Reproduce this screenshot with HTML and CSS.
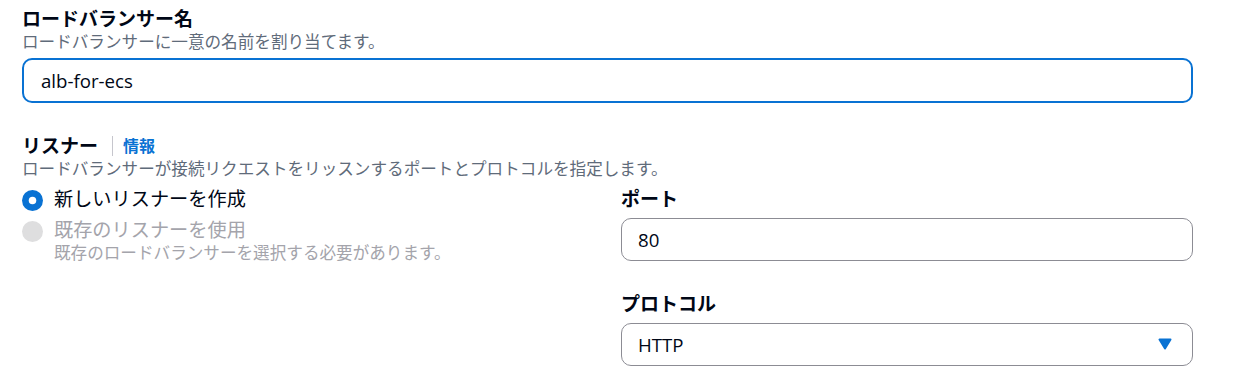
FILE: index.html
```html
<!DOCTYPE html>
<html lang="ja">
<head>
<meta charset="utf-8">
<title>ロードバランサー</title>
<link rel="stylesheet" href="styles.css">
</head>
<body>
<div class="page">
  <section class="field">
    <div class="label">ロードバランサー名</div>
    <div class="desc">ロードバランサーに一意の名前を割り当てます。</div>
    <div class="input focused">alb-for-ecs</div>
  </section>

  <section class="field listener">
    <div class="label-row">
      <span class="label">リスナー</span>
      <span class="info">情報</span>
    </div>
    <div class="desc">ロードバランサーが接続リクエストをリッスンするポートとプロトコルを指定します。</div>

    <div class="columns">
      <div class="radio-group">
        <div class="radio">
          <svg class="radio-icon" width="21" height="21" viewBox="0 0 100 100"><circle cx="50" cy="50" r="50" fill="#0972d3"/><circle cx="50" cy="50" r="18" fill="#ffffff"/></svg>
          <span class="radio-label">新しいリスナーを作成</span>
        </div>
        <div class="radio disabled">
          <svg class="radio-icon" width="21" height="21" viewBox="0 0 100 100"><circle cx="50" cy="50" r="50" fill="#dededf"/></svg>
          <div class="radio-text">
            <span class="radio-label">既存のリスナーを使用</span>
            <span class="radio-desc">既存のロードバランサーを選択する必要があります。</span>
          </div>
        </div>
      </div>

      <div class="right">
        <div class="sub-field">
          <div class="label">ポート</div>
          <div class="input">80</div>
        </div>
        <div class="sub-field protocol">
          <div class="label">プロトコル</div>
          <div class="input select">
            <span>HTTP</span>
            <svg class="caret" width="14" height="12" viewBox="0 0 14 12"><polygon points="1.5,1.5 12.5,1.5 7,10.5" fill="#0972d3" stroke="#0972d3" stroke-width="2" stroke-linejoin="round"/></svg>
          </div>
        </div>
      </div>
    </div>
  </section>
</div>
</body>
</html>
```
FILE: styles.css
```css
* { box-sizing: border-box; }

body {
  margin: 0;
  background: #ffffff;
  font-family: "Open Sans", "Noto Sans CJK JP", sans-serif;
  color: #000716;
}

.page {
  padding: 7px 44px 0 22px;
}

.label {
  font-size: 19px;
  line-height: 24px;
  font-weight: 700;
  color: #000716;
}

.desc {
  font-size: 16.6px;
  line-height: 21.33px;
  color: #5f6b7a;
}

.input {
  margin-top: 6px;
  height: 43px;
  border: 1px solid #8c8c94;
  border-radius: 10px;
  padding: 0 20px 0 16px;
  display: flex;
  align-items: center;
  font-size: 18.67px;
  color: #000716;
}

.input.focused {
  height: 45px;
  border: 2px solid #0972d3;
  padding-left: 17px;
}

.listener {
  margin-top: 31px;
}

.label-row {
  display: flex;
  align-items: center;
  height: 24px;
}

.info {
  margin-left: 14px;
  padding-left: 10px;
  border-left: 1px solid #c6c6cd;
  font-size: 16px;
  line-height: 20px;
  font-weight: 700;
  color: #0972d3;
}

.columns {
  margin-top: 7px;
  display: grid;
  grid-template-columns: 1fr 1fr;
  column-gap: 27px;
}

.radio-group {
  display: flex;
  flex-direction: column;
  gap: 7px;
}

.radio {
  display: flex;
  align-items: flex-start;
  gap: 11px;
}

.radio-icon {
  flex: none;
  margin-top: 3px;
}

.radio-text {
  display: flex;
  flex-direction: column;
}

.radio-label {
  font-size: 19.2px;
  line-height: 24px;
  color: #000716;
}

.radio-desc {
  font-size: 16.6px;
  line-height: 21.33px;
  color: #a4a4ab;
}

.radio.disabled .radio-label {
  color: #a4a4ab;
}

.right {
  display: flex;
  flex-direction: column;
}

.sub-field .input {
  margin-top: 7px;
}

.protocol {
  margin-top: 31px;
}

.select {
  justify-content: space-between;
}

.caret {
  display: block;
}
```
